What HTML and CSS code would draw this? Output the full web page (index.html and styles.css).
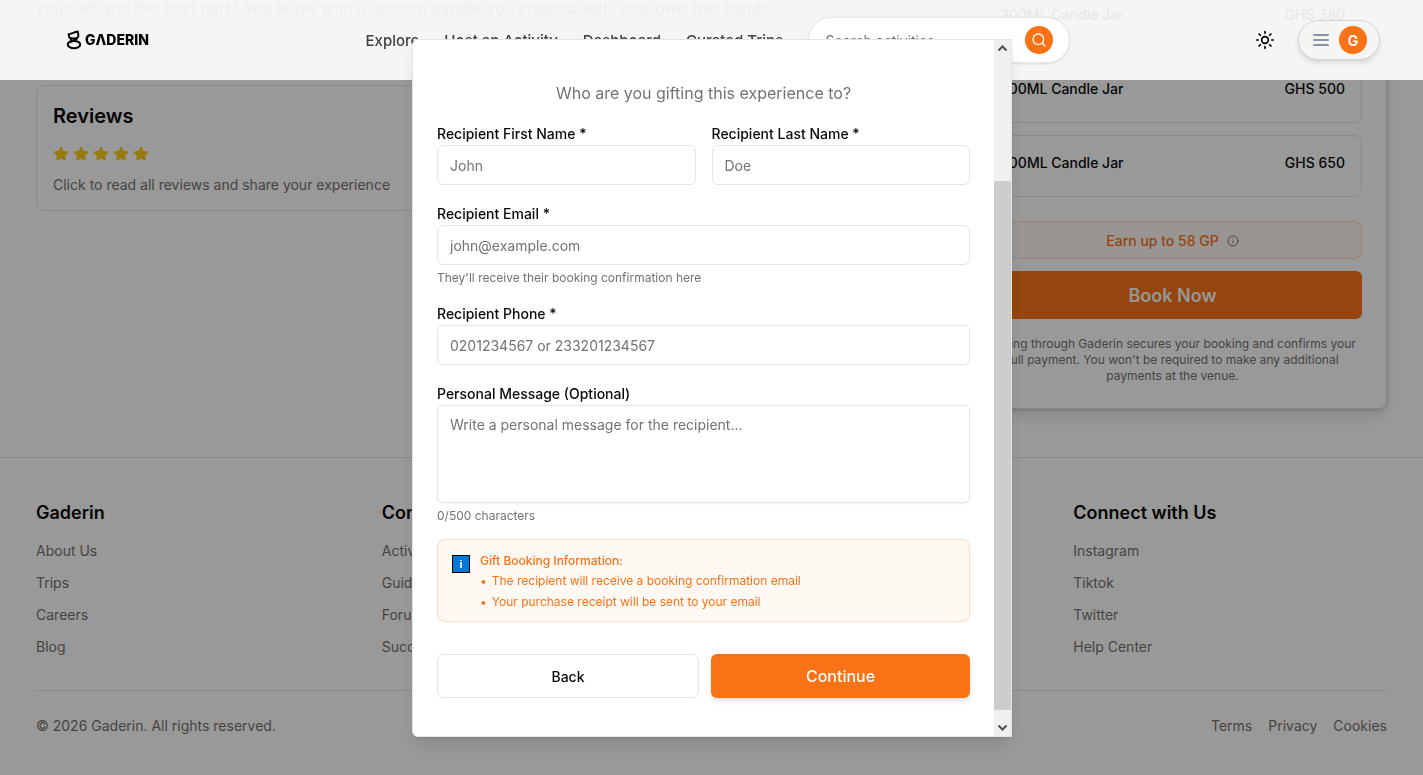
FILE: index.html
```html
<!DOCTYPE html>
<html lang="en">
<head>
    <meta charset="UTF-8">
    <meta name="viewport" content="width=device-width, initial-scale=1.0">
    <title>Gaderin - Gift this experience</title>
    <link rel="stylesheet" href="styles.css">
</head>
<body>
    <!-- Page behind the dialog, scrolled to its end -->
    <div class="page">
        <main class="content">
            <div class="details">
                <p class="description">yourself and the best part? You leave with a custom candle you created with your own two hands.</p>
                <section class="reviews">
                    <h2>Reviews</h2>
                    <div class="stars">
                        <svg viewBox="0 0 24 24"><use href="#star"/></svg>
                        <svg viewBox="0 0 24 24"><use href="#star"/></svg>
                        <svg viewBox="0 0 24 24"><use href="#star"/></svg>
                        <svg viewBox="0 0 24 24"><use href="#star"/></svg>
                        <svg viewBox="0 0 24 24"><use href="#star"/></svg>
                    </div>
                    <p>Click to read all reviews and share your experience</p>
                </section>
            </div>

            <aside class="booking">
                <ul class="options">
                    <li><span>300ML Candle Jar</span><span>GHS 380</span></li>
                    <li><span>500ML Candle Jar</span><span>GHS 500</span></li>
                    <li><span>600ML Candle Jar</span><span>GHS 650</span></li>
                </ul>
                <div class="points">
                    <span>Earn up to 58 GP</span>
                    <svg viewBox="0 0 24 24"><circle cx="12" cy="12" r="10"/><path d="M12 16v-4M12 8h.01"/></svg>
                </div>
                <button class="book-button" type="button">Book Now</button>
                <p class="note">Paying through Gaderin secures your booking and confirms your full payment. You won't be required to make any additional payments at the venue.</p>
            </aside>
        </main>

        <footer>
            <div class="footer-links">
                <div>
                    <h3>Gaderin</h3>
                    <ul>
                        <li><a href="#">About Us</a></li>
                        <li><a href="#">Trips</a></li>
                        <li><a href="#">Careers</a></li>
                        <li><a href="#">Blog</a></li>
                    </ul>
                </div>
                <div>
                    <h3>Community</h3>
                    <ul>
                        <li><a href="#">Activities</a></li>
                        <li><a href="#">Guides</a></li>
                        <li><a href="#">Forum</a></li>
                        <li><a href="#">Success</a></li>
                    </ul>
                </div>
                <div></div>
                <div>
                    <h3>Connect with Us</h3>
                    <ul>
                        <li><a href="#">Instagram</a></li>
                        <li><a href="#">Tiktok</a></li>
                        <li><a href="#">Twitter</a></li>
                        <li><a href="#">Help Center</a></li>
                    </ul>
                </div>
            </div>
            <div class="footer-bottom">
                <p>© 2026 Gaderin. All rights reserved.</p>
                <div class="legal">
                    <a href="#">Terms</a>
                    <a href="#">Privacy</a>
                    <a href="#">Cookies</a>
                </div>
            </div>
        </footer>
    </div>

    <div class="overlay"></div>

    <!-- Navigation Bar -->
    <header>
        <a class="logo" href="#" aria-label="Gaderin">
            <svg class="logo-mark" viewBox="0 0 16 20">
                <path d="M2.600 4.200C5 3.800 8 2.400 11.800 1.600C11.400 3.400 13.400 5.800 12 7.200C10 8.800 4.800 9 3.600 7.800C3 7 3.200 5.400 2.600 4.200Z"/>
                <path d="M5.400 8.800L4.600 11.400M11 8.600L5.400 11.600"/>
                <ellipse cx="8" cy="14.600" rx="6.200" ry="3.700"/>
            </svg>
            <span>G&Lambda;DERIN</span>
        </a>
        <div class="nav-center">
            <nav>
                <a href="#">Explore</a>
                <a href="#">Host an Activity</a>
                <a href="#">Dashboard</a>
                <a href="#">Curated Trips</a>
            </nav>
            <form class="search">
                <input type="text" placeholder="Search activities..." aria-label="Search activities">
                <button type="button" aria-label="Search">
                    <svg viewBox="0 0 24 24"><circle cx="11" cy="11" r="8"/><path d="M21 21l-4.300-4.300"/></svg>
                </button>
            </form>
        </div>
        <div class="nav-right">
            <button class="theme" type="button" aria-label="Change theme">
                <svg viewBox="0 0 24 24"><circle cx="12" cy="12" r="4"/><path d="M12 2v2M12 20v2M4.930 4.930l1.410 1.410M17.660 17.660l1.410 1.410M2 12h2M20 12h2M6.340 17.660l-1.410 1.410M19.070 4.930l-1.410 1.410"/></svg>
            </button>
            <button class="account" type="button" aria-label="Account menu">
                <svg viewBox="0 0 20 20"><path d="M3 5h14M3 10h14M3 15h14"/></svg>
                <span class="avatar">G</span>
            </button>
        </div>
    </header>

    <!-- Gift Dialog -->
    <div class="dialog-wrap">
        <div class="dialog" role="dialog" aria-label="Gift this experience">
            <form class="gift-form">
                <p class="question">Who are you gifting this experience to?</p>
                <div class="row">
                    <div class="field">
                        <label for="first-name">Recipient First Name *</label>
                        <input id="first-name" type="text" placeholder="John">
                    </div>
                    <div class="field">
                        <label for="last-name">Recipient Last Name *</label>
                        <input id="last-name" type="text" placeholder="Doe">
                    </div>
                </div>
                <div class="field">
                    <label for="email">Recipient Email *</label>
                    <input id="email" type="email" placeholder="john@example.com">
                    <p class="hint">They'll receive their booking confirmation here</p>
                </div>
                <div class="field">
                    <label for="phone">Recipient Phone *</label>
                    <input id="phone" type="tel" placeholder="0201234567 or 233201234567">
                </div>
                <div class="field">
                    <label for="message">Personal Message (Optional)</label>
                    <textarea id="message" placeholder="Write a personal message for the recipient..."></textarea>
                    <p class="hint">0/500 characters</p>
                </div>
                <div class="info">
                    <svg viewBox="0 0 18 18">
                        <path fill="#000" d="M0 0h18v18H0z"/>
                        <path fill="#0078d7" d="M1 1h16v16H1z"/>
                        <path fill="#cfe6f8" d="M8 5h2v1H8zM8 7h2v6H8z"/>
                    </svg>
                    <div>
                        <h4>Gift Booking Information:</h4>
                        <ul>
                            <li>The recipient will receive a booking confirmation email</li>
                            <li>Your purchase receipt will be sent to your email</li>
                        </ul>
                    </div>
                </div>
                <div class="actions">
                    <button class="back" type="button">Back</button>
                    <button class="continue" type="button">Continue</button>
                </div>
            </form>
            <div class="scrollbar">
                <svg viewBox="0 0 17 17"><path d="M4.500 10.500l4-4 4 4"/></svg>
                <div class="track"><div class="thumb"></div></div>
                <svg viewBox="0 0 17 17"><path d="M4.500 6.500l4 4 4-4"/></svg>
            </div>
        </div>
    </div>

    <svg class="sprite">
        <symbol id="star" viewBox="0 0 24 24">
            <path d="M12 2l3.090 6.260L22 9.270l-5 4.870 1.180 6.880L12 17.770l-6.180 3.250L7 14.140 2 9.270l6.910-1.010L12 2z"/>
        </symbol>
    </svg>
</body>
</html>
```
FILE: styles.css
```css
* {
    box-sizing: border-box;
}

body {
    margin: 0;
    font-family: 'Inter', sans-serif;
    font-size: 14px;
    line-height: 20px;
    color: #0c0a09;
    background-color: #fff;
}

h2, h3, h4, p, ul {
    margin: 0;
    padding: 0;
}

ul {
    list-style: none;
}

a {
    color: inherit;
    text-decoration: none;
}

button, input, textarea {
    font-family: inherit;
    font-size: 14px;
    color: inherit;
}

button {
    cursor: pointer;
}

svg {
    display: block;
    flex-shrink: 0;
    fill: none;
    stroke-linecap: round;
    stroke-linejoin: round;
}

.sprite {
    display: none;
}

/* Page */
.page {
    display: flex;
    flex-direction: column;
    justify-content: flex-end;
    height: 100vh;
    overflow: hidden;
}

.content {
    display: grid;
    grid-template-columns: repeat(3, 1fr);
    gap: 32px;
    padding: 0 36px 48px;
}

.details {
    grid-column: span 2;
    padding-top: 33px;
}

.description {
    padding-bottom: 31px;
    border-bottom: 1px solid #e5e5e5;
    font-size: 16px;
    line-height: 26px;
    color: #78716c;
}

.reviews {
    margin-top: 32px;
    padding: 16px 16px 15px;
    border: 1px solid #e5e5e5;
    border-radius: 8px;
}

.reviews h2 {
    font-size: 20px;
    font-weight: 600;
    line-height: 28px;
}

.reviews p {
    color: #78716c;
}

.stars {
    display: flex;
    gap: 4px;
    margin: 16px 0 13px;
}

.stars svg {
    width: 16px;
    height: 16px;
    fill: #facc15;
    stroke: #facc15;
    stroke-width: 2;
}

/* Booking card */
.booking {
    padding: 24px;
    border: 1px solid #e5e5e5;
    border-radius: 8px;
    box-shadow: 0 10px 15px -3px rgba(0, 0, 0, 0.1), 0 4px 6px -4px rgba(0, 0, 0, 0.1), 0 0 4px rgba(0, 0, 0, 0.2);
}

.options {
    display: grid;
    gap: 12px;
}

.options li {
    display: flex;
    justify-content: space-between;
    height: 62px;
    padding: 17px 16px;
    border: 1px solid #e5e5e5;
    border-radius: 8px;
    font-weight: 500;
}

.points {
    display: flex;
    align-items: center;
    justify-content: center;
    gap: 8px;
    margin: 24px 0 12px;
    padding: 9px 8px 7px;
    border: 1px solid rgba(249, 115, 22, 0.2);
    border-radius: 8px;
    background-color: rgba(249, 115, 22, 0.05);
    color: #f97316;
    font-weight: 500;
}

.points svg {
    width: 12px;
    height: 12px;
    stroke: #78716c;
    stroke-width: 2;
}

.book-button {
    width: 100%;
    height: 48px;
    border: none;
    border-radius: 6px;
    background-color: #f97316;
    color: #fafaf9;
    font-size: 18px;
    font-weight: 600;
}

.note {
    margin-top: 17px;
    font-size: 12px;
    line-height: 16px;
    text-align: center;
    color: #78716c;
}

/* Footer */
footer {
    padding: 41px 36px 39px;
    border-top: 1px solid #e5e5e5;
    color: #78716c;
}

.footer-links {
    display: grid;
    grid-template-columns: repeat(4, 1fr);
    gap: 32px;
    padding-bottom: 33px;
    border-bottom: 1px solid #e5e5e5;
}

footer h3 {
    margin-bottom: 14px;
    font-size: 18px;
    font-weight: 600;
    line-height: 28px;
    color: #0c0a09;
}

footer ul {
    display: grid;
    gap: 12px;
}

.footer-bottom {
    display: flex;
    justify-content: space-between;
    padding-top: 25px;
}

.legal {
    display: flex;
    gap: 16px;
}

.overlay {
    position: fixed;
    inset: 0;
    background-color: rgba(0, 0, 0, 0.4);
}

/* Header lies over the overlay */
header {
    position: fixed;
    top: 0;
    left: 0;
    right: 0;
    display: flex;
    align-items: center;
    justify-content: space-between;
    height: 80px;
    padding: 0 43px;
    background-color: rgba(255, 255, 255, 0.9);
}

.logo {
    display: flex;
    align-items: center;
    gap: 3px;
    padding: 0 32px 0 23px;
    color: #000;
    font-size: 14px;
    font-weight: 800;
}

.logo-mark {
    width: 16px;
    height: 20px;
    stroke: #000;
    stroke-width: 2;
}

.nav-center, .nav-right, nav {
    display: flex;
    align-items: center;
}

.nav-center, nav {
    gap: 25px;
}

nav {
    padding-top: 2px;
    font-size: 15px;
    font-weight: 500;
    color: #44403c;
}

.search {
    display: flex;
    align-items: center;
    width: 262px;
    height: 46px;
    padding: 0 16px;
    border: 1px solid #e5e5e5;
    border-radius: 23px;
    background-color: #fff;
    box-shadow: 0 1px 3px rgba(0, 0, 0, 0.1);
}

.search input {
    flex: 1;
    min-width: 0;
    padding: 0;
    border: none;
    outline: none;
    background: none;
}

.search button {
    display: grid;
    place-items: center;
    width: 28px;
    height: 28px;
    padding: 0;
    border: none;
    border-radius: 50%;
    background-color: #f97316;
}

.search svg {
    width: 16px;
    height: 16px;
    stroke: #fff;
    stroke-width: 2;
}

.nav-right {
    gap: 23px;
}

.theme {
    padding: 0;
    border: none;
    background: none;
}

.theme svg {
    width: 20px;
    height: 20px;
    stroke: #000;
    stroke-width: 2;
}

.account {
    display: flex;
    align-items: center;
    gap: 8px;
    height: 40px;
    padding: 0 12px;
    border: 1px solid #d1d5db;
    border-radius: 20px;
    background-color: #f5f5f4;
    box-shadow: 0 4px 6px -1px rgba(0, 0, 0, 0.1), 0 2px 4px -2px rgba(0, 0, 0, 0.1);
}

.account svg {
    width: 20px;
    height: 20px;
    stroke: #8a94a6;
    stroke-width: 2;
}

.avatar {
    width: 28px;
    height: 28px;
    border-radius: 50%;
    background-color: #f97316;
    color: #fff;
    font-weight: 600;
    line-height: 29px;
}

/* Dialog */
.dialog-wrap {
    position: fixed;
    inset: 0;
    display: flex;
    align-items: center;
    justify-content: center;
    padding: 1px 0 0 1px;
}

.dialog {
    display: flex;
    width: 600px;
    max-width: 100%;
    border: 1px solid #e5e5e5;
    border-radius: 6px 0 0 6px;
    background-color: #fff;
    box-shadow: 0 10px 15px -3px rgba(0, 0, 0, 0.1), 0 4px 6px -4px rgba(0, 0, 0, 0.1);
}

.gift-form {
    flex: 1;
    display: grid;
    gap: 20px;
    padding: 41px 24px 38px;
}

.question {
    font-size: 16px;
    line-height: 24px;
    text-align: center;
    color: #78716c;
}

.row {
    display: grid;
    grid-template-columns: 1fr 1fr;
    gap: 16px;
}

.field {
    display: flex;
    flex-direction: column;
}

.field label {
    margin-bottom: 2px;
    font-weight: 500;
    line-height: 18px;
}

.field input, .field textarea {
    width: 100%;
    height: 40px;
    padding: 8px 12px;
    border: 1px solid #e5e5e5;
    border-radius: 6px;
    background-color: #fff;
    line-height: 20px;
}

.field textarea {
    display: block;
    height: 98px;
    padding: 9px 12px;
    resize: none;
    box-shadow: 0 1px 2px rgba(0, 0, 0, 0.05);
}

input::placeholder, textarea::placeholder {
    color: #78716c;
    opacity: 1;
}

.hint {
    margin-top: 5px;
    font-size: 12px;
    line-height: 15px;
    color: #78716c;
}

.info {
    display: flex;
    gap: 10px;
    margin-top: -4px;
    padding: 13px 14px 11px;
    border: 1px solid rgba(249, 115, 22, 0.2);
    border-radius: 8px;
    background-color: rgba(249, 115, 22, 0.05);
    color: #f97316;
    font-size: 12px;
    line-height: 16px;
}

.info svg {
    width: 18px;
    height: 18px;
    margin-top: 2px;
}

.info h4 {
    margin-bottom: 4px;
    font-size: 12px;
    font-weight: 500;
}

.info ul {
    display: grid;
    gap: 5px;
}

.info li::before {
    content: '•';
    margin-right: 5px;
}

.actions {
    display: grid;
    grid-template-columns: 1fr 259px;
    gap: 12px;
    margin-top: 12px;
}

.actions button {
    height: 44px;
    border-radius: 6px;
    font-weight: 500;
}

.back {
    border: 1px solid #e5e5e5;
    background-color: #fff;
}

.actions .continue {
    border: none;
    background-color: #f97316;
    color: #fafaf9;
    font-size: 16px;
    box-shadow: 0 4px 6px -1px rgba(0, 0, 0, 0.1), 0 2px 4px -2px rgba(0, 0, 0, 0.1);
}

/* Scrollbar */
.scrollbar {
    display: flex;
    flex-direction: column;
    width: 17px;
    background-color: #f0f0f0;
}

.scrollbar svg {
    width: 17px;
    height: 17px;
    stroke: #505050;
    stroke-width: 2;
    stroke-linecap: butt;
    stroke-linejoin: miter;
}

.track {
    display: flex;
    flex: 1;
    align-items: flex-end;
    padding-bottom: 9px;
}

.thumb {
    width: 100%;
    height: 81%;
    background-color: #cdcdcd;
}
```
